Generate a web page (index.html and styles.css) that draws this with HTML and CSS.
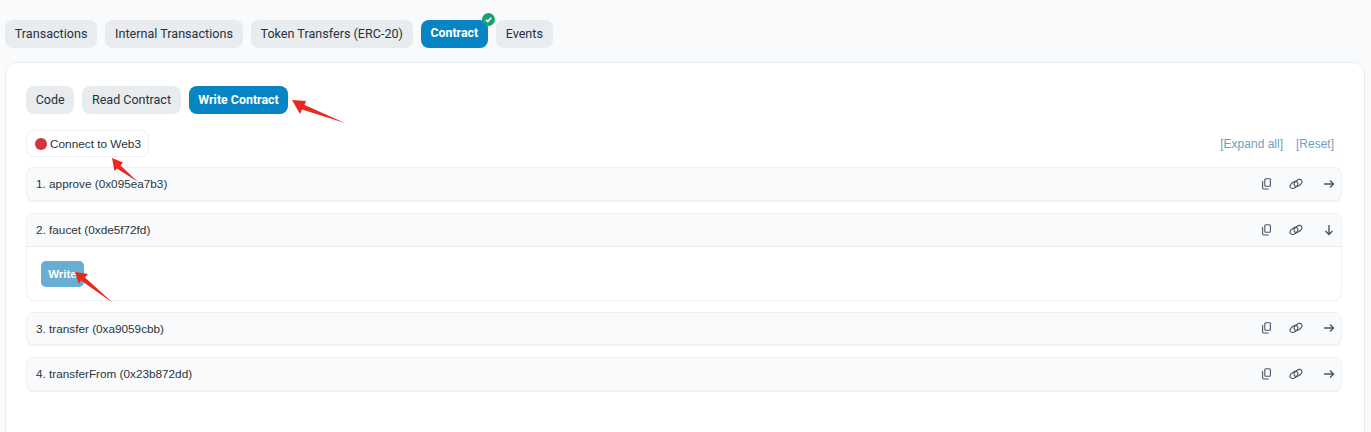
FILE: index.html
```html
<!DOCTYPE html>
<html lang="en">
<head>
<meta charset="utf-8">
<title>Contract</title>
<link rel="stylesheet" href="styles.css">
</head>
<body>
<svg width="0" height="0" class="defs">
  <symbol id="i-copy" viewBox="0 0 12 12"><path d="M4.800 .8h3.600a1 1 0 0 1 1 1v5.400a1 1 0 0 1-1 1H4.800a1 1 0 0 1-1-1V1.800a1 1 0 0 1 1-1Z M1.600 3v7a1 1 0 0 0 1 1h5" fill="none" stroke="currentColor" stroke-width="1.100"/></symbol>
  <symbol id="i-link" viewBox="0 0 14 12"><ellipse cx="5" cy="7" rx="4.400" ry="2.700" transform="rotate(-35 5 7)" fill="none" stroke="currentColor" stroke-width="1.100"/><ellipse cx="9" cy="5" rx="4.400" ry="2.700" transform="rotate(-35 9 5)" fill="none" stroke="currentColor" stroke-width="1.100"/></symbol>
  <symbol id="i-right" viewBox="0 0 12 12"><path d="M1 6h9.500M7 2.500 10.500 6 7 9.500" fill="none" stroke="currentColor" stroke-width="1.400"/></symbol>
  <symbol id="i-down" viewBox="0 0 12 12"><path d="M6 1v9.500M2.500 7 6 10.500 9.500 7" fill="none" stroke="currentColor" stroke-width="1.400"/></symbol>
</svg>
<main class="page">
  <nav class="tabs">
    <a class="pill">Transactions</a>
    <a class="pill">Internal Transactions</a>
    <a class="pill">Token Transfers (ERC-20)</a>
    <a class="pill active verified">Contract
      <span class="badge"><svg viewBox="0 0 12 12" width="13" height="13"><path d="M3.600 6.200 5.300 7.900 8.500 4.400" fill="none" stroke="#fff" stroke-width="1.400"/></svg></span>
    </a>
    <a class="pill">Events</a>
  </nav>
  <section class="card">
    <nav class="tabs subtabs">
      <a class="pill">Code</a>
      <a class="pill">Read Contract</a>
      <a class="pill active">Write Contract</a>
    </nav>
    <div class="toolbar">
      <button class="connect"><span class="dot"></span>Connect to Web3</button>
      <div class="links"><a>[Expand all]</a><a>[Reset]</a></div>
    </div>
    <div class="item">
      <div class="item-head"><span>1. approve (0x095ea7b3)</span>
        <span class="icons"><svg class="ic"><use href="#i-copy"/></svg><svg class="ic lk"><use href="#i-link"/></svg><svg class="ic arrow"><use href="#i-right"/></svg></span></div>
    </div>
    <div class="item open">
      <div class="item-head"><span>2. faucet (0xde5f72fd)</span>
        <span class="icons"><svg class="ic"><use href="#i-copy"/></svg><svg class="ic lk"><use href="#i-link"/></svg><svg class="ic arrow"><use href="#i-down"/></svg></span></div>
      <div class="item-body"><button class="write">Write</button></div>
    </div>
    <div class="item">
      <div class="item-head"><span>3. transfer (0xa9059cbb)</span>
        <span class="icons"><svg class="ic"><use href="#i-copy"/></svg><svg class="ic lk"><use href="#i-link"/></svg><svg class="ic arrow"><use href="#i-right"/></svg></span></div>
    </div>
    <div class="item">
      <div class="item-head"><span>4. transferFrom (0x23b872dd)</span>
        <span class="icons"><svg class="ic"><use href="#i-copy"/></svg><svg class="ic lk"><use href="#i-link"/></svg><svg class="ic arrow"><use href="#i-right"/></svg></span></div>
    </div>
  </section>
  <svg class="annot" width="1371" height="432" viewBox="0 0 1371 432">
    <path d="M292 100 L306 101 L304.500 105 L345 123 L302 109.500 L300 114 Z" fill="#e8281c"/>
    <path d="M112 158 L123 162.500 L120.500 165.500 L138 182 L117 168.500 L114.500 171 Z" fill="#e8281c"/>
    <path d="M75 272 L88 274 L85 277.500 L113 303 L81 280.500 L79 284 Z" fill="#e8281c"/>
  </svg>
</main>
</body>
</html>
```
FILE: styles.css
```css
* { box-sizing: border-box; }
html, body { margin: 0; height: 100%; overflow: hidden; }
body { background: #f9fafc; color: #1f2937; font-family: "Liberation Sans", Arial, sans-serif; font-size: 12px; }
.defs { position: absolute; }
.page { position: relative; padding: 20px 6px 0 5px; height: 432px; overflow: hidden; }
.tabs { display: flex; gap: 8px; height: 28px; }
.pill { display: flex; align-items: center; height: 28px; padding: 0 9.800px 2px; border-radius: 8px; background: #e9ecef; color: #27313d; font-family: Roboto, sans-serif; font-size: 12.600px; font-weight: 400; white-space: nowrap; position: relative; }
.pill.active { background: #0784c3; color: #fff; font-size: 12.300px; font-weight: 700; }
.subtabs .pill { padding: 0 9.700px 2px; font-size: 12.500px; }
.subtabs .pill.active { font-size: 12.400px; }
.badge { position: absolute; top: -7px; right: -7px; width: 13px; height: 13px; border-radius: 50%; background: #14a36f; display: flex; }
.card { margin-top: 14px; height: 420px; background: #fff; border: 1px solid #e9ecef; border-radius: 12px; padding: 23px 22px 0 20px; }
.toolbar { display: flex; justify-content: space-between; align-items: center; margin-top: 16px; margin-bottom: 10px; height: 27px; }
.connect { display: flex; align-items: center; gap: 3.500px; height: 27px; padding: 0 7.500px; background: #fff; border: 1px solid #eef0f3; border-radius: 8px; font-family: "Liberation Sans", Arial, sans-serif; font-size: 11.800px; color: #2b3440; }
.dot { width: 12px; height: 12px; border-radius: 50%; background: #d1343f; }
.links { display: flex; gap: 13px; padding-right: 8px; color: #6f9fbd; font-size: 12px; }
.item { border: 1px solid #eef0f3; border-bottom-width: 2px; border-radius: 8px; margin-bottom: 11px; background: #fff; overflow: hidden; }
.item-head { height: 31.500px; display: flex; justify-content: space-between; align-items: center; padding: 0 6px 0 9px; background: #f9fafc; font-size: 11.750px; color: #2b3440; }
.open { border-bottom-width: 1px; }
.open .item-head { height: 33px; border-bottom: 1px solid #e9ecef; }
.icons { display: flex; align-items: center; color: #4b5563; }
.ic { width: 12px; height: 12px; margin-left: 16px; }
.lk { width: 14px; }
.arrow { margin-left: 20px; }
.item-body { padding: 14px; height: 53px; }
.write { display: block; width: 43px; height: 26px; margin: 0; padding: 0; border: 0; border-radius: 5px; background: #67add4; color: #fff; font-family: "Liberation Sans", Arial, sans-serif; font-size: 11.500px; font-weight: 700; }
.annot { position: absolute; left: 0; top: 0; pointer-events: none; }
```
